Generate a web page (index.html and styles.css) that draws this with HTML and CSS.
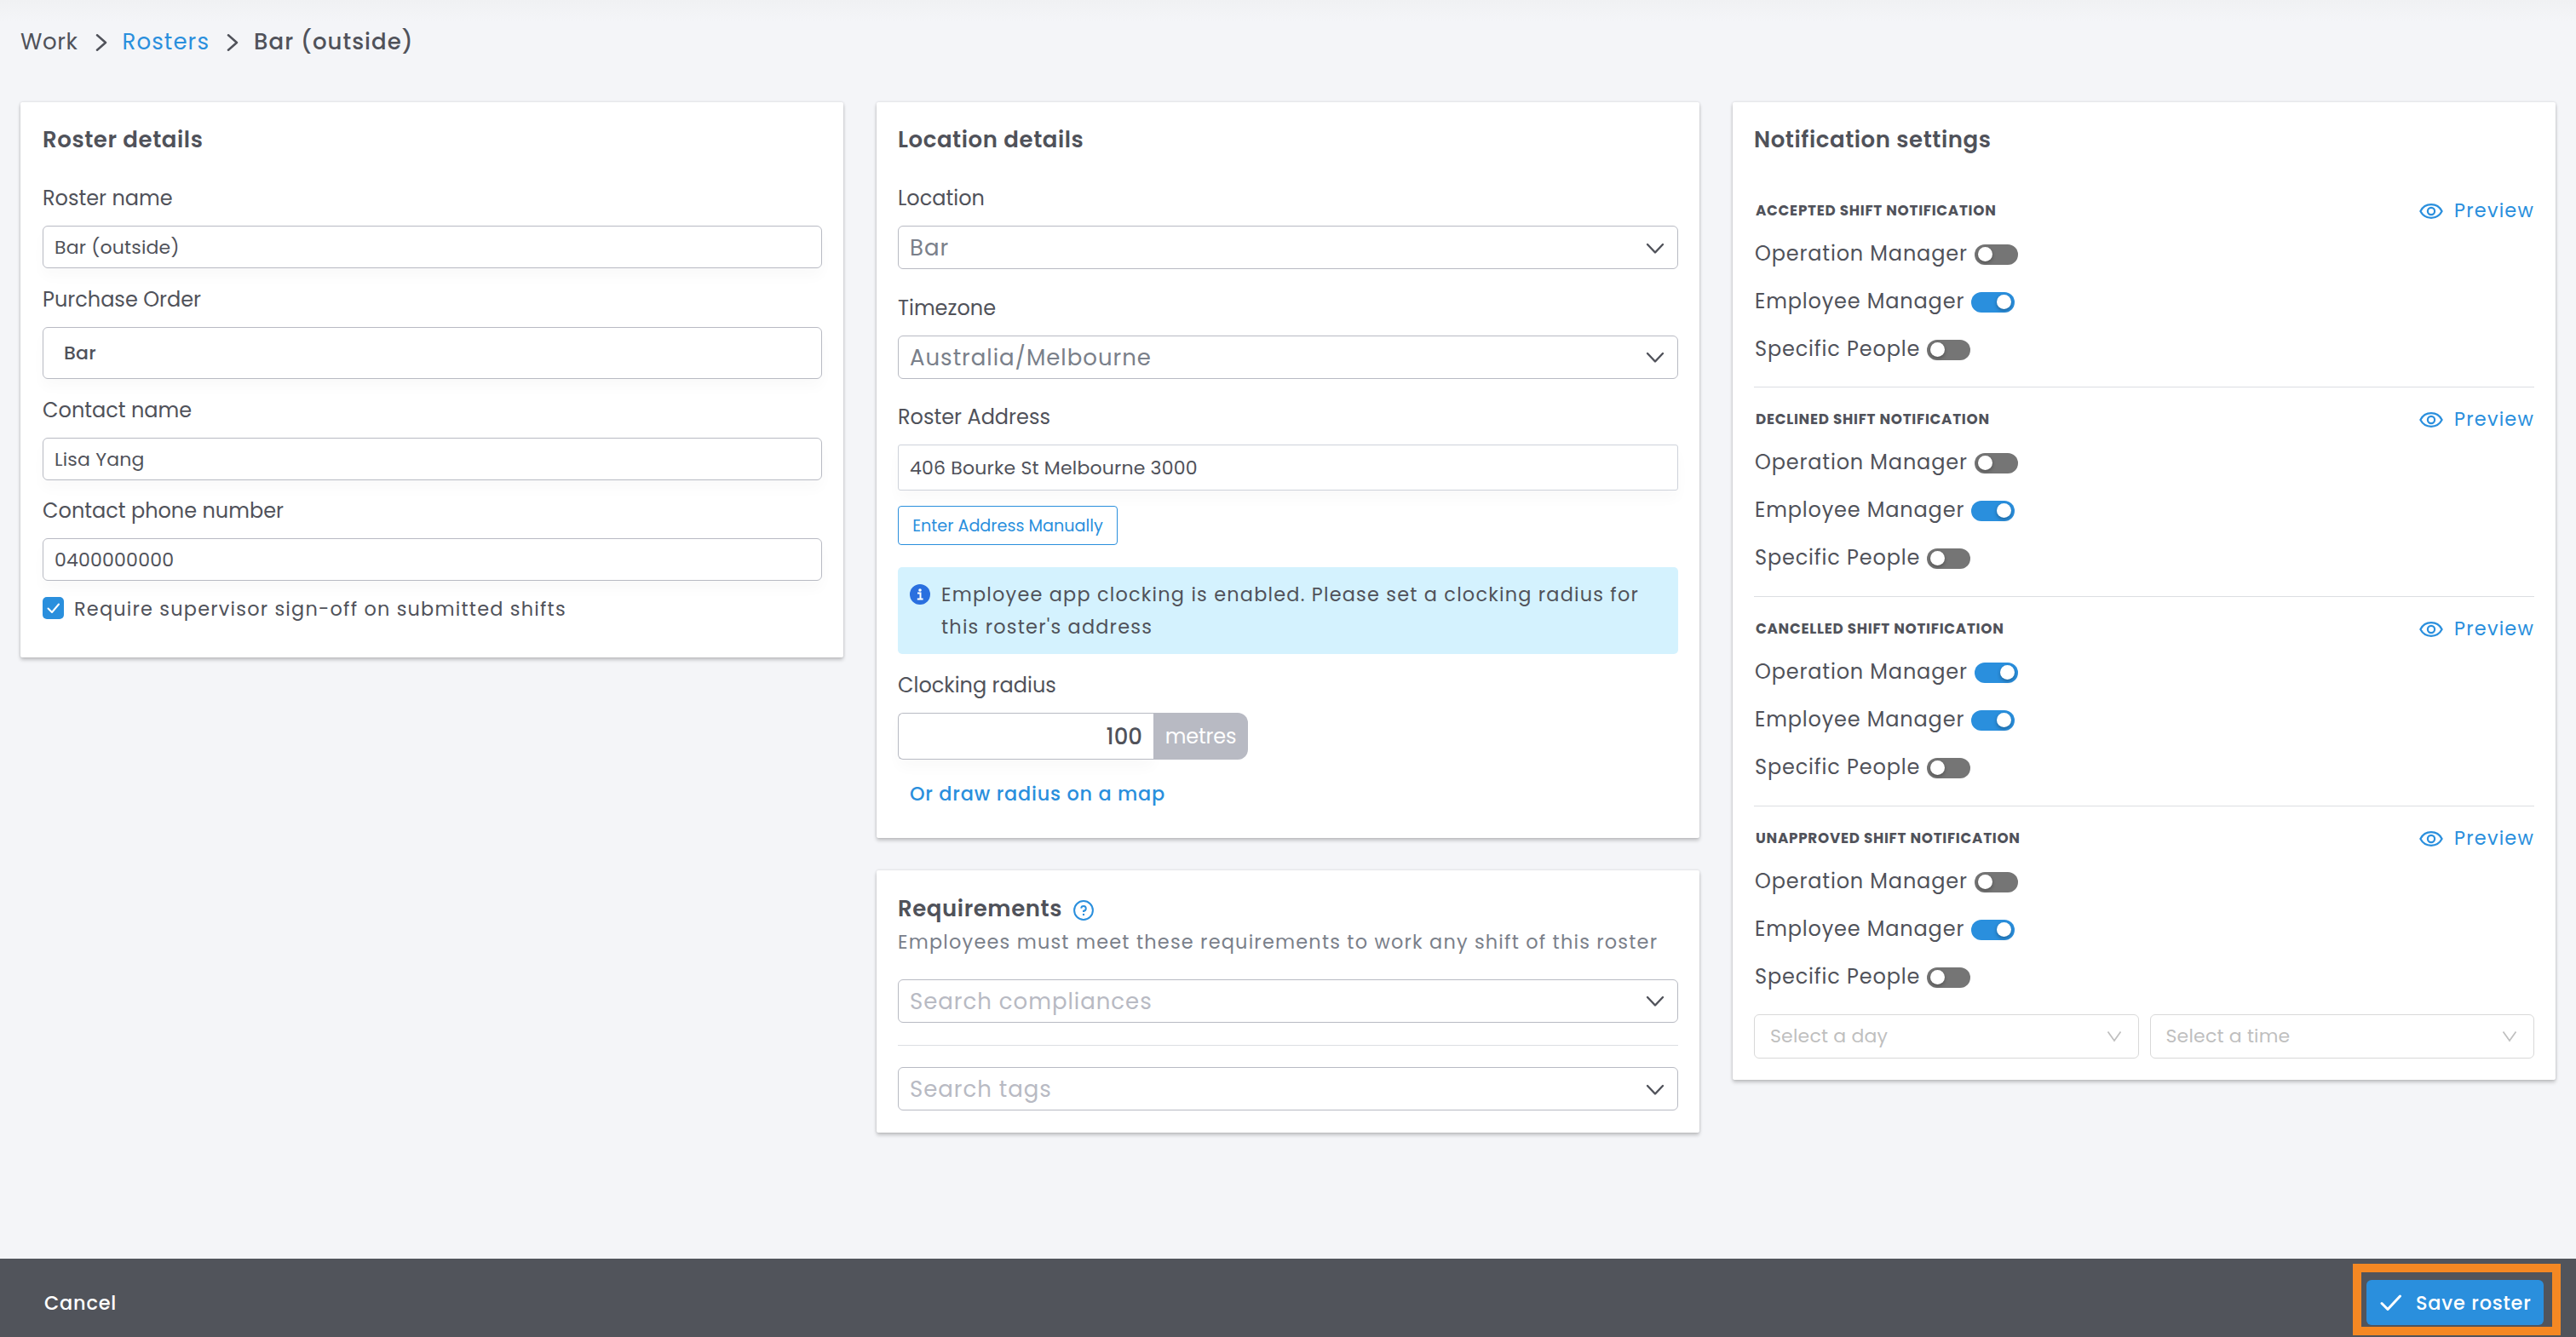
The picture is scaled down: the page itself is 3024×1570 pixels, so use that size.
FILE: index.html
```html
<!DOCTYPE html>
<html lang="en">
<head>
<meta charset="utf-8">
<title>Bar (outside)</title>
<link rel="stylesheet" href="styles.css">
</head>
<body>
<svg class="sprite" aria-hidden="true">
  <symbol id="chevron-right" viewBox="0 0 14 20"><path d="M2 1.300 12 10 2 18.700" fill="none" stroke="currentColor" stroke-width="2.500" stroke-linecap="round" stroke-linejoin="round"/></symbol>
  <symbol id="chevron-down" viewBox="0 0 22 14"><path d="M2 2 11 11.500 20 2" fill="none" stroke="currentColor" stroke-width="2.400" stroke-linecap="round" stroke-linejoin="round"/></symbol>
  <symbol id="caret-down" viewBox="0 0 18 14"><path d="M1.500 1.500 9 12 16.500 1.500" fill="none" stroke="currentColor" stroke-width="1.700"/></symbol>
  <symbol id="eye" viewBox="0 0 28 18"><path d="M1.400 9C4 4 8.600 1.200 14 1.200S24 4 26.600 9C24 14 19.400 16.800 14 16.800S4 14 1.400 9Z" fill="none" stroke="currentColor" stroke-width="2.200"/><circle cx="14" cy="9" r="4.100" fill="none" stroke="currentColor" stroke-width="2.200"/></symbol>
</svg>

<nav class="breadcrumb">
  <span class="crumb crumb-root">Work</span>
  <svg class="crumb-arrow"><use href="#chevron-right"/></svg>
  <a class="crumb crumb-link">Rosters</a>
  <svg class="crumb-arrow"><use href="#chevron-right"/></svg>
  <span class="crumb crumb-current">Bar (outside)</span>
</nav>

<main class="columns">
  <div class="column">
    <section class="card card-roster">
      <h2 class="card-title">Roster details</h2>
      <label class="label">Roster name</label>
      <div class="input">Bar (outside)</div>
      <label class="label label-next">Purchase Order</label>
      <div class="input input-tall">Bar</div>
      <label class="label label-next">Contact name</label>
      <div class="input">Lisa Yang</div>
      <label class="label label-last">Contact phone number</label>
      <div class="input">0400000000</div>
      <div class="check-row">
        <svg class="checkbox" viewBox="0 0 26 26"><rect width="25" height="26" rx="5" fill="#2a8fdd"/><path d="M6.500 13.500 11 18 19 8.500" fill="none" stroke="#fff" stroke-width="2" stroke-linecap="round" stroke-linejoin="round"/></svg>
        <span class="note">Require supervisor sign-off on submitted shifts</span>
      </div>
    </section>
  </div>

  <div class="column">
    <section class="card card-location">
      <h2 class="card-title">Location details</h2>
      <label class="label">Location</label>
      <div class="select select-low">Bar<svg class="arrow"><use href="#chevron-down"/></svg></div>
      <label class="label label-timezone">Timezone</label>
      <div class="select">Australia/Melbourne<svg class="arrow"><use href="#chevron-down"/></svg></div>
      <label class="label label-address">Roster Address</label>
      <div class="input input-address">406 Bourke St Melbourne 3000</div>
      <button class="button-outline">Enter Address Manually</button>
      <div class="info">
        <svg class="info-icon" viewBox="0 0 24 24"><circle cx="12" cy="12" r="12" fill="#2a6fdf"/><circle cx="12" cy="7" r="1.800" fill="#fff"/><path d="M9 10.600H12.500V17.200M8.800 17.400H15.600" fill="none" stroke="#fff" stroke-width="2"/></svg>
        <p class="note">Employee app clocking is enabled. Please set a clocking radius for<br>this roster's address</p>
      </div>
      <label class="label label-radius">Clocking radius</label>
      <div class="radius">
        <div class="radius-value">100</div>
        <div class="radius-unit">metres</div>
      </div>
      <a class="map-link">Or draw radius on a map</a>
    </section>

    <section class="card card-requirements">
      <h2 class="card-title">Requirements
        <svg class="help" viewBox="0 0 24 24"><circle cx="12" cy="12" r="10.900" fill="none" stroke="#2a8fdd" stroke-width="2"/><path d="M9.200 9.600A2.800 2.800 0 1 1 12 12.600V14" fill="none" stroke="#2a8fdd" stroke-width="1.900"/><circle cx="12" cy="16.900" r="1.200" fill="#2a8fdd"/></svg>
      </h2>
      <p class="note subtitle">Employees must meet these requirements to work any shift of this roster</p>
      <div class="select placeholder">Search compliances<svg class="arrow"><use href="#chevron-down"/></svg></div>
      <hr class="rule">
      <div class="select placeholder select-low">Search tags<svg class="arrow"><use href="#chevron-down"/></svg></div>
    </section>
  </div>

  <div class="column">
    <section class="card card-notifications">
      <h2 class="card-title">Notification settings</h2>

      <div class="group group-first">
        <div class="group-head"><h3>ACCEPTED SHIFT NOTIFICATION</h3><a class="preview"><svg class="eye"><use href="#eye"/></svg>Preview</a></div>
        <div class="option">Operation Manager<span class="toggle"></span></div>
        <div class="option">Employee Manager<span class="toggle on"></span></div>
        <div class="option">Specific People<span class="toggle"></span></div>
      </div>

      <div class="group">
        <div class="group-head"><h3>DECLINED SHIFT NOTIFICATION</h3><a class="preview"><svg class="eye"><use href="#eye"/></svg>Preview</a></div>
        <div class="option">Operation Manager<span class="toggle"></span></div>
        <div class="option">Employee Manager<span class="toggle on"></span></div>
        <div class="option">Specific People<span class="toggle"></span></div>
      </div>

      <div class="group">
        <div class="group-head"><h3>CANCELLED SHIFT NOTIFICATION</h3><a class="preview"><svg class="eye"><use href="#eye"/></svg>Preview</a></div>
        <div class="option">Operation Manager<span class="toggle on"></span></div>
        <div class="option">Employee Manager<span class="toggle on"></span></div>
        <div class="option">Specific People<span class="toggle"></span></div>
      </div>

      <div class="group group-last">
        <div class="group-head"><h3>UNAPPROVED SHIFT NOTIFICATION</h3><a class="preview"><svg class="eye"><use href="#eye"/></svg>Preview</a></div>
        <div class="option">Operation Manager<span class="toggle"></span></div>
        <div class="option">Employee Manager<span class="toggle on"></span></div>
        <div class="option">Specific People<span class="toggle"></span></div>
      </div>

      <div class="schedule">
        <div class="picker">Select a day<svg class="caret"><use href="#caret-down"/></svg></div>
        <div class="picker">Select a time<svg class="caret"><use href="#caret-down"/></svg></div>
      </div>
    </section>
  </div>
</main>

<footer class="footer">
  <a class="cancel">Cancel</a>
  <div class="save">
    <svg class="tick" viewBox="0 0 26 20"><path d="M2 10.500 9 17.500 23.500 2" fill="none" stroke="#fff" stroke-width="3" stroke-linecap="round" stroke-linejoin="round"/></svg>
    <span class="save-text">Save roster</span>
    <div class="save-highlight"></div>
  </div>
</footer>
</body>
</html>
```
FILE: styles.css
```css
* { box-sizing: border-box; }

body {
  margin: 0;
  min-height: 1570px;
  display: flex;
  flex-direction: column;
  background: linear-gradient(#f0f1f3, #f4f5f8 26px) no-repeat #f4f5f8;
  color: #50525a;
  font-family: Poppins, Inter, sans-serif;
}

h2, h3, p { margin: 0; }
svg { display: block; flex: none; }
.sprite { display: none; }

.breadcrumb {
  display: flex;
  align-items: center;
  padding: 29px 0 0 24px;
  font-size: 26px;
  line-height: 40px;
}
.crumb-root { letter-spacing: 0.6px; }
.crumb-link { color: #2a8fdd; letter-spacing: 1.1px; }
.crumb-current { font-weight: 500; letter-spacing: 1.05px; margin-top: -1px; }
.crumb-arrow { width: 14px; height: 20px; margin: 1px 18px 0 20px; }

.columns {
  flex: 1;
  display: grid;
  grid-template-columns: repeat(3, 966px);
  gap: 39px;
  padding: 51px 24px 0;
}
.column { display: flex; flex-direction: column; gap: 38px; }

.card {
  display: flex;
  flex-direction: column;
  background: #fff;
  padding: 24px 25px 0;
  border-radius: 2px;
  box-shadow: 0 3px 4px rgba(0, 0, 0, 0.2), 0 0 3px rgba(0, 0, 0, 0.14);
}
.card-roster { height: 652px; padding-left: 26px; }
.card-location { height: 864px; }
.card-requirements { height: 308px; }
.card-notifications { height: 1148px; }

.card-title {
  display: flex;
  align-items: center;
  font-size: 26px;
  font-weight: 600;
  line-height: 40px;
  letter-spacing: 0.58px;
  margin-bottom: 31px;
}
.card-notifications .card-title { margin-bottom: 25px; }
.card-requirements .card-title { margin: 1px 0 0; }
.help { width: 24px; height: 24px; margin: 3px 0 0 13px; }

.label { font-size: 24px; line-height: 36px; padding-bottom: 14px; }
.label-next { margin-top: 19px; }
.label-last { margin-top: 18px; }
.label-timezone { margin-top: 28px; }
.label-address { margin-top: 27px; }
.label-radius { margin-top: 19px; }

.input {
  display: flex;
  align-items: center;
  height: 50px;
  padding: 0 13px;
  border: 1px solid #b8bac3;
  border-radius: 6px;
  font-size: 22px;
  letter-spacing: 0.2px;
  box-shadow: 0 10px 16px rgba(0, 60, 50, 0.025);
}
.input-tall { height: 61px; padding-left: 24px; font-weight: 500; }
.input-address { height: 54px; border-color: #ced2da; border-radius: 3px; }

.note { font-size: 22.4px; line-height: 38px; letter-spacing: 1.21px; }
.check-row { display: flex; align-items: center; gap: 11px; height: 26px; margin-top: 19px; }
.check-row .note { padding-top: 1px; }
.checkbox { width: 26px; height: 26px; }

.select {
  display: flex;
  align-items: center;
  justify-content: space-between;
  height: 51px;
  padding: 1px 15px 0 13px;
  border: 1px solid #b8bac3;
  border-radius: 6px;
  color: #7a808a;
  font-size: 26px;
  letter-spacing: 0.97px;
}
.select-low { padding-top: 2px; }
.placeholder { color: #b8bac3; }
.arrow { width: 22px; height: 14px; color: #50525a; }

.button-outline {
  align-self: flex-start;
  width: 258px;
  height: 46px;
  margin-top: 18px;
  padding: 0;
  border: 1px solid #2a8fdd;
  border-radius: 4px;
  background: #fff;
  color: #2a8fdd;
  font: 19.2px Poppins, Inter, sans-serif;
}

.info {
  display: flex;
  gap: 13px;
  height: 102px;
  margin-top: 26px;
  padding: 13px 14px;
  border-radius: 5px;
  background: #d4f2fe;
}
.info-icon { width: 24px; height: 24px; margin-top: 7px; }

.radius { display: flex; height: 55px; }
.radius-value {
  display: flex;
  align-items: center;
  justify-content: flex-end;
  width: 300px;
  padding: 1px 13px 0 0;
  border: 1px solid #b8bac3;
  border-right: 0;
  border-radius: 6px 0 0 6px;
  font-size: 26px;
  font-weight: 500;
  box-shadow: 0 10px 16px rgba(0, 60, 50, 0.025);
}
.radius-unit {
  display: flex;
  align-items: center;
  justify-content: center;
  width: 111px;
  border-radius: 0 12px 12px 0;
  background: #b8bac3;
  color: #fff;
  font-size: 24px;
  letter-spacing: -0.2px;
}
.map-link {
  margin: 22px 0 0 14px;
  color: #2a8fdd;
  font-size: 22.4px;
  font-weight: 500;
  line-height: 36px;
  letter-spacing: 0.8px;
}

.subtitle { color: #7a808a; margin-bottom: 25px; }
.rule { width: 100%; height: 1px; margin: 26px 0 25px; border: 0; background: #dcdee2; }

.group { height: 246px; padding-top: 19px; border-bottom: 1px solid #dcdee2; }
.group-first { padding-top: 20px; }
.group-last { height: 244px; border-bottom: 0; }
.group-head { display: flex; align-items: center; justify-content: space-between; height: 36px; margin-bottom: 4px; }
.group-head h3 { padding-left: 2px; font-size: 16.8px; font-weight: 700; letter-spacing: 0.72px; }
.preview { display: flex; align-items: center; color: #2a8fdd; font-size: 22.4px; letter-spacing: 1.2px; }
.eye { width: 28px; height: 18px; margin: 1px 13px 0 0; }

.option { display: flex; align-items: center; gap: 8px; height: 56px; padding-left: 1px; font-size: 24px; letter-spacing: 0.84px; }
.toggle {
  display: flex;
  width: 51px;
  height: 24px;
  margin-top: 4px;
  padding: 3px 4px;
  border-radius: 12px;
  background: #757575;
}
.toggle::before {
  content: "";
  width: 17px;
  height: 17px;
  border-radius: 50%;
  background: #fff;
  box-shadow: 0 2px 4px rgba(0, 0, 0, 0.3);
}
.toggle.on { justify-content: flex-end; background: #2a8fdd; }

.schedule { display: flex; gap: 13px; }
.picker {
  flex: 1;
  display: flex;
  align-items: center;
  justify-content: space-between;
  height: 52px;
  padding: 0 19px 1px 18px;
  border: 1px solid #d9d9d9;
  border-radius: 6px;
  color: #bfbfbf;
  font-size: 22px;
  letter-spacing: 0.2px;
}
.caret { width: 18px; height: 14px; }

.footer {
  display: flex;
  align-items: flex-start;
  justify-content: space-between;
  height: 92px;
  padding: 25px 38px 0 52px;
  background: #51545b;
  color: #fff;
  font-size: 22.4px;
  font-weight: 500;
  line-height: 54px;
  letter-spacing: 0.8px;
}
.save {
  position: relative;
  display: flex;
  align-items: center;
  width: 208px;
  height: 53px;
  padding-left: 16px;
  border-radius: 6px;
  background: #2a8fdd;
}
.save-text { padding-top: 1px; }
.tick { width: 26px; height: 20px; margin-right: 16px; }
.save-highlight {
  position: absolute;
  top: -19px;
  right: -20px;
  bottom: -12px;
  left: -16px;
  border: 10px solid #f58823;
}
```
